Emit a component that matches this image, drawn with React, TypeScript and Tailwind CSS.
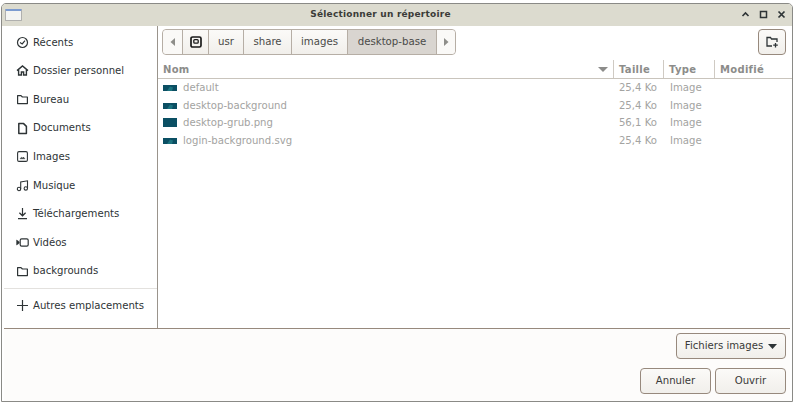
import { ReactNode } from 'react';

function Ico({ children, w = 13, sw = 1.2 }: { children: ReactNode; w?: number; sw?: number }) {
  return (
    <svg width={w} height="13" viewBox={`0 0 ${w} 13`} fill="none" stroke="#2e3436" strokeWidth={sw} className="shrink-0">
      {children}
    </svg>
  );
}

const folder = <path d="M1.6 2.6 H5 L6.4 4 H11.4 V10.6 H1.6 Z" strokeLinejoin="round" />;

const places: { label: string; icon: ReactNode }[] = [
  {
    label: 'Récents',
    icon: (
      <Ico>
        <circle cx="6.5" cy="6.5" r="5" />
        <path d="M4 6.6 L6.2 8 L9 4.6" sw-x="" />
      </Ico>
    ),
  },
  {
    label: 'Dossier personnel',
    icon: (
      <Ico sw={1.4}>
        <path d="M1 6.6 L6.5 2 L12 6.6" />
        <path d="M2.6 5.8 V11 H5.4 V8 H7.6 V11 H10.4 V5.8" />
      </Ico>
    ),
  },
  { label: 'Bureau', icon: <Ico>{folder}</Ico> },
  {
    label: 'Documents',
    icon: (
      <Ico sw={1.5}>
        <path d="M2.8 1.6 H7.6 L10.4 4.4 V11.6 H2.8 Z" strokeLinejoin="round" />
      </Ico>
    ),
  },
  {
    label: 'Images',
    icon: (
      <Ico sw={1.1}>
        <rect x="1.6" y="1.6" width="9.8" height="9.8" rx="1.4" />
        <path d="M4 8.8 L5.4 7.2 L6.4 8 L7.4 7 L9 8.8 Z" fill="#2e3436" strokeWidth="0.4" />
      </Ico>
    ),
  },
  {
    label: 'Musique',
    icon: (
      <Ico sw={1.1}>
        <circle cx="3" cy="10" r="1.7" />
        <circle cx="9.8" cy="9.4" r="1.7" />
        <path d="M4.7 10 V3 L11.5 1.8 V9.4" />
      </Ico>
    ),
  },
  {
    label: 'Téléchargements',
    icon: (
      <Ico sw={1.2}>
        <path d="M6.5 1 V8.6 M3.4 5.8 L6.5 8.8 L9.6 5.8" />
        <path d="M2 11.6 H11" />
      </Ico>
    ),
  },
  {
    label: 'Vidéos',
    icon: (
      <Ico sw={1.2}>
        <rect x="4.2" y="2.8" width="8" height="7.4" rx="1.4" />
        <path d="M0.6 4 V9 L3.2 7.2 V5.8 Z" fill="#2e3436" strokeWidth="0.5" />
      </Ico>
    ),
  },
  { label: 'backgrounds', icon: <Ico>{folder}</Ico> },
];

const files = [
  { name: 'default', size: '25,4 Ko', full: false },
  { name: 'desktop-background', size: '25,4 Ko', full: false },
  { name: 'desktop-grub.png', size: '56,1 Ko', full: true },
  { name: 'login-background.svg', size: '25,4 Ko', full: false },
];

const crumbs = [
  { label: 'usr', width: 'w-[35px]' },
  { label: 'share', width: 'w-[48px]' },
  { label: 'images', width: 'w-[56px]' },
];

function FileIcon({ full }: { full: boolean }) {
  return (
    <svg width="14" height="9" viewBox="0 0 14 9" className="shrink-0">
      <rect x="0" y={full ? 0 : 2} width="14" height={full ? 9 : 6} fill="#0b4f63" />
      {!full && <path d="M4 8 L7 3.5 L10 4.5 L9 8 Z" fill="#1d7480" />}
    </svg>
  );
}

const btn =
  'flex items-center justify-center h-[26px] rounded-[4px] border border-[#97897d] bg-gradient-to-b from-[#fbfaf8] to-[#f1efeb] text-[#3a3a38]';

export default function App() {
  return (
    <div className="w-[794px] h-[408px] bg-white pt-[3px] pl-px font-['DejaVu_Sans',sans-serif] text-[10.15px] text-[#2e3436]">
      <div className="flex flex-col h-[399px] w-[792px] border border-[#8a8a86] rounded-t-[5px] overflow-hidden">
        <div className="flex items-center h-[22px] bg-[#dcdbcf] shrink-0 pl-[3px] pr-[6px]">
          <div className="w-[17px] h-[12px] rounded-[1px] border border-[#b0b0ae] border-t-2 border-t-[#7c9bd0] bg-[#f4f4f2]" />
          <div className="flex-1 text-center text-[9px] font-bold text-[#3b3b38] tracking-[0.22px] pr-[2px]">Sélectionner un répertoire</div>
          <div className="flex items-center gap-[9px] -mt-[1px]">
            <svg width="9" height="9" viewBox="0 0 9 9" fill="none" stroke="#2e3436" strokeWidth="1.6">
              <path d="M1.5 6 L4.5 3 L7.5 6" />
            </svg>
            <svg width="9" height="9" viewBox="0 0 9 9" fill="none" stroke="#2e3436" strokeWidth="1.5">
              <rect x="1.5" y="1.5" width="6" height="6" />
            </svg>
            <svg width="9" height="9" viewBox="0 0 9 9" fill="none" stroke="#2e3436" strokeWidth="1.7">
              <path d="M1.5 1.5 L7.5 7.5 M7.5 1.5 L1.5 7.5" />
            </svg>
          </div>
        </div>

        <div className="flex h-[302px] bg-white shrink-0">
          <div className="w-[154px] ml-[2px] border-r border-[#9a948c] shrink-0 flex flex-col pt-[2px]">
            {places.map((p) => (
              <div key={p.label} className="flex items-center h-[28.6px] pl-[12px] gap-[4px] shrink-0">
                {p.icon}
                <span className="whitespace-nowrap">{p.label}</span>
              </div>
            ))}
            <div className="h-px bg-[#e3e1de] mt-[3px]" />
            <div className="flex items-center h-[33px] pl-[12px] gap-[4px]">
              <Ico sw={1.2}>
                <path d="M6.5 1 V12 M1 6.5 H12" />
              </Ico>
              <span className="whitespace-nowrap">Autres emplacements</span>
            </div>
          </div>

          <div className="flex-1 flex flex-col min-w-0">
            <div className="flex items-center justify-between h-[26px] mt-[3px] pl-[4px] pr-[6px] shrink-0">
              <div className="flex h-[26px] rounded-[4px] border border-[#b6aea5] text-[#4a4a48] text-[10.2px]">
                <div className="w-[19px] flex items-center justify-center bg-[#faf9f7] rounded-l-[4px]">
                  <svg width="6" height="8" viewBox="0 0 6 8"><path d="M5 0 V8 L0.5 4 Z" fill="#8e8e8a" /></svg>
                </div>
                <div className="w-[26px] flex items-center justify-center border-l border-[#b6aea5] bg-gradient-to-b from-[#fbfaf8] to-[#f1efeb]">
                  <svg width="12" height="12" viewBox="0 0 12 12" fill="none" stroke="#1a1a1a" strokeWidth="1.7">
                    <rect x="1" y="1" width="10" height="10" rx="1.6" />
                    <rect x="3.8" y="3.6" width="4.4" height="3.6" rx="1" strokeWidth="1.3" />
                  </svg>
                </div>
                {crumbs.map((c) => (
                  <div key={c.label} className={`${c.width} flex items-center justify-center border-l border-[#b6aea5] bg-gradient-to-b from-[#fbfaf8] to-[#f1efeb]`}>
                    {c.label}
                  </div>
                ))}
                <div className="w-[89px] flex items-center justify-center border-l border-[#b6aea5] bg-[#d9d5d0]">desktop-base</div>
                <div className="w-[19px] flex items-center justify-center border-l border-[#b6aea5] bg-[#faf9f7] rounded-r-[4px]">
                  <svg width="6" height="8" viewBox="0 0 6 8"><path d="M1 0 V8 L5.5 4 Z" fill="#8e8e8a" /></svg>
                </div>
              </div>
              <div className={`${btn} w-[28px]`}>
                <svg width="13" height="12" viewBox="0 0 13 12" fill="none" stroke="#2e3436" strokeWidth="1.3">
                  <path d="M6 10 H1 V1.5 H4.5 L5.5 3 H11 V6" />
                  <path d="M9.5 7 V11.5 M7.2 9.2 H11.8" />
                </svg>
              </div>
            </div>

            <div className="flex h-[19px] mt-[5px] border-b border-[#c9c4bc] font-bold text-[#8c8c8a] text-[10px] tracking-[0.3px] shrink-0">
              <div className="w-[455px] pl-[5px] flex items-center justify-between pr-[5px]">
                <span>Nom</span>
                <svg width="10" height="5" viewBox="0 0 10 5"><path d="M0 0 H10 L5 5 Z" fill="#8c8c8a" /></svg>
              </div>
              <div className="w-[50px] pl-[5px] flex items-center border-l border-[#cfcac3]">Taille</div>
              <div className="w-[51px] pl-[5px] flex items-center border-l border-[#cfcac3]">Type</div>
              <div className="flex-1 pl-[5px] flex items-center border-l border-[#cfcac3]">Modifié</div>
            </div>

            <div className="flex flex-col text-[#a3a3a1]">
              {files.map((f) => (
                <div key={f.name} className="flex items-center h-[17.6px]">
                  <div className="w-[455px] pl-[5px] flex items-center gap-[6px]">
                    <FileIcon full={f.full} />
                    <span>{f.name}</span>
                  </div>
                  <div className="w-[50px] text-right pr-[6px] whitespace-nowrap">{f.size}</div>
                  <div className="pl-[7px]">Image</div>
                </div>
              ))}
            </div>
          </div>
        </div>

        <div className="flex-1 flex flex-col items-end border-t border-[#97897d] bg-[#fdfcfb] mx-[2px] pt-[4px] pr-[4px]">
          <div className={`${btn} w-[110px] gap-[5px]`}>
            <span>Fichiers images</span>
            <svg width="9" height="5" viewBox="0 0 9 5"><path d="M0 0 H9 L4.5 5 Z" fill="#2e3436" /></svg>
          </div>
          <div className="flex gap-[4px] mt-[9px]">
            <div className={`${btn} w-[71px]`}>Annuler</div>
            <div className={`${btn} w-[71px]`}>Ouvrir</div>
          </div>
        </div>
      </div>
    </div>
  );
}
